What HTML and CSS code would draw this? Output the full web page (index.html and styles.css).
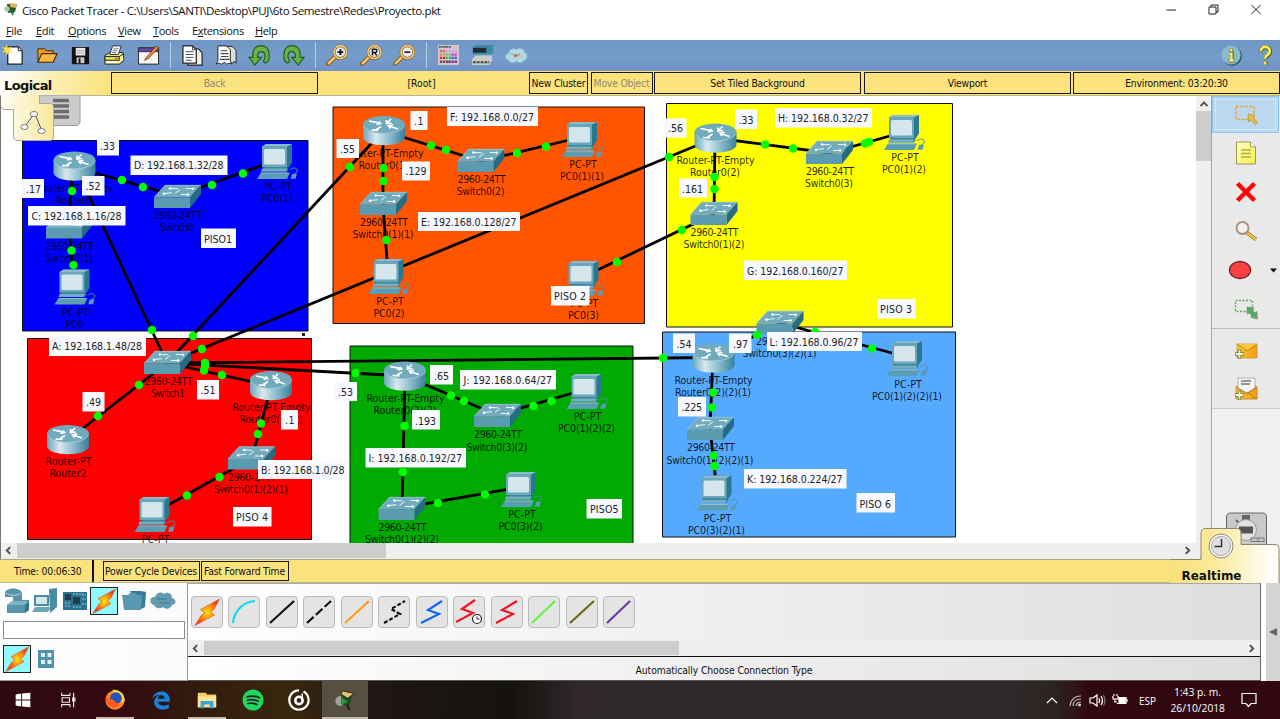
FILE: index.html
```html
<!DOCTYPE html>
<html lang="en">
<head>
<meta charset="utf-8">
<title>Cisco Packet Tracer</title>
<link rel="stylesheet" href="styles.css">
</head>
<body>
<svg class="defs" width="0" height="0">
  <defs>
    <linearGradient id="metal" x1="0" x2="1" y1="0" y2="0"><stop offset="0" stop-color="#6aa5ba"/><stop offset=".3" stop-color="#d9e9ef"/><stop offset=".6" stop-color="#92c0cf"/><stop offset="1" stop-color="#377f99"/></linearGradient>
    <linearGradient id="tabL" x1="0" x2="1"><stop offset="0" stop-color="#fffdf4"/><stop offset="1" stop-color="#f8e89a"/></linearGradient>
    <linearGradient id="tabR" gradientUnits="userSpaceOnUse" x1="1170" x2="1272" y1="0" y2="0"><stop offset="0" stop-color="#f8e07a"/><stop offset=".45" stop-color="#fbeb9c"/><stop offset="1" stop-color="#fffefa"/></linearGradient>
    <radialGradient id="flame"><stop offset="0" stop-color="#ffe600"/><stop offset=".45" stop-color="#ff9a10"/><stop offset="1" stop-color="#f23a1c"/></radialGradient>
    <linearGradient id="note" x1="0" y1="0" x2="1" y2="1"><stop offset="0" stop-color="#ffffc8"/><stop offset="1" stop-color="#f4f04a"/></linearGradient>
    <linearGradient id="mail" x1="0" x2="1"><stop offset="0" stop-color="#ffc72e"/><stop offset="1" stop-color="#f39c12"/></linearGradient>
    <symbol id="router" viewBox="0 0 42 30" overflow="visible">
      <path d="M0 8.5V21C0 32 42 32 42 21V8.5z" fill="url(#metal)"/>
      <ellipse cx="21" cy="8.7" rx="21" ry="8.7" fill="#6faabd"/>
      <path d="M1 10.500C5 19.500 37 19.500 41 10.500" fill="none" stroke="#a9cfdb" stroke-width=".8"/>
      <g fill="none" stroke="#fff" stroke-width="1.700"><path d="M6 5l11 2.200M13.500 8.500l4-1-1.500-2M35 13l-9-3M30 8.800l-4.500 1 2 2.600M24 7l4-4M23.500 4l0 3.500 5-.5M18 10.500l-5 3.300M8.500 14l7 .3"/></g>
    </symbol>
    <symbol id="switch" viewBox="0 0 47 23" overflow="visible">
      <path d="M0 12.500L11 0H47L36 12.500z" fill="#72abbe"/><path d="M36 12.500L47 0V9L36 23z" fill="#246b84"/>
      <path d="M0 12.500H36V23H0z" fill="#5a9bb1"/><path d="M0 12.500L11 .3H47" fill="none" stroke="#9cc8d5" stroke-width=".7"/>
      <g stroke="#edf7fa" stroke-width="1" fill="none"><path d="M17 3.500l7 .3M26 4.500l-5 4M10 8.500l8-.8M27 9.500h8M32 3.500h7"/></g>
      <g fill="#fff"><circle cx="16" cy="3.500" r="1.300"/><circle cx="39" cy="3.700" r="1.300"/><circle cx="10" cy="8.700" r="1.300"/><circle cx="34" cy="9.500" r="1.300"/></g>
    </symbol>
    <symbol id="pc" viewBox="0 0 42 35" overflow="visible">
      <path d="M5 2.500L9 0H35V18.500L31 24.500H6z" fill="#287892"/><path d="M5 2.500H30V23H5z" fill="#6ba7bb"/>
      <path d="M5 2.500L9 0H35L30 2.500z" fill="#8abccc"/><rect x="7" y="5" width="21" height="15.500" rx="1.500" fill="#d5e5ec"/>
      <path d="M9 23h18l5 2-2 2.500H5z" fill="#3c88a1"/><path d="M5 24.500h25l-1 3H4z" fill="#75adc0"/>
      <path d="M4 28.500H33L30 35H0z" fill="#5b9eb4"/><path d="M4 29h27" stroke="#a6cbd7" stroke-width=".7"/>
      <path d="M33 26c4-4 9-1 7 2l-3 2" fill="none" stroke="#4e91a8" stroke-width="1"/><path d="M35 30l5-.3-1.500 5h-4.800z" fill="#5b9bb1"/>
    </symbol>
    <symbol id="bolt" viewBox="0 0 28 28"><path d="M26.500 1L7.500 11.500l4.500 3.500-3.500 2L2 27.500 21.500 17l-4-3.500 3.500-2z" fill="url(#flame)" stroke="#d9530d" stroke-width=".6"/></symbol>
    <symbol id="glass" viewBox="0 0 24 24"><path d="M10 13L2.500 20.500" stroke="#7a5a22" stroke-width="4.600" stroke-linecap="round"/><path d="M10 13L2.800 20.200" stroke="#f6c269" stroke-width="2.800" stroke-linecap="round"/><circle cx="15" cy="8.500" r="6.600" fill="#e9eef3" stroke="#7a5a22" stroke-width="3"/><circle cx="15" cy="8.500" r="6.700" fill="none" stroke="#f6c777" stroke-width="1.800"/></symbol>
    <symbol id="left" viewBox="0 0 8 8"><path d="M5.500 1L2.500 4l3 3" fill="none" stroke="#505050" stroke-width="1.700"/></symbol>
  </defs>
</svg>

<header class="title">
  <svg width="14" height="16" viewBox="0 0 14 16"><path d="M3 2l10 0-2 8-7 1z" fill="#255c22"/><path d="M6 1l7 1-1 4-6-1z" fill="#d7b25c"/><circle cx="3" cy="7" r="2.700" fill="#b9c0b7"/><path d="M5 8l5 2-1 4z" fill="#2c7b2d"/></svg>
  <span class="title-text">Cisco Packet Tracer - C:\Users\SANTI\Desktop\PUJ\6to Semestre\Redes\Proyecto.pkt</span>
  <svg class="winctl" width="100" height="20" viewBox="0 0 100 20" fill="none" stroke="#222"><path d="M6.500 10h9.500"/><path d="M49 7h7v7h-7zM51 7V5h7v7h-2"/><path d="M92 5l9 9M101 5l-9 9" transform="translate(-.5)"/></svg>
</header>
<nav class="menu"><span class="m1"><u>F</u>ile</span><span class="m2"><u>E</u>dit</span><span class="m3"><u>O</u>ptions</span><span class="m4"><u>V</u>iew</span><span class="m5"><u>T</u>ools</span><span class="m6">E<u>x</u>tensions</span><span class="m7"><u>H</u>elp</span></nav>

<div class="toolbar">
  <span class="tb"><svg viewBox="0 0 24 24"><path d="M6 3h11l4 4v14H6z" fill="#fff" stroke="#222" stroke-width="1.300"/><path d="M17 3v4h4" fill="#ddd" stroke="#222"/><path d="M5 0l1 4 4-1-2 3 3 3-4-1-2 4-1-4-4 1 3-3-3-3 4 1z" fill="#ffe53b"/></svg></span>
  <span class="tb"><svg viewBox="0 0 24 24"><path d="M2 19V5h7l1.500 2H18v4" fill="#f19a1c" stroke="#3d2a08"/><path d="M2 19l4-9h16l-4 9z" fill="#ffb73e" stroke="#3d2a08" stroke-width="1.200"/></svg></span>
  <span class="tb"><svg viewBox="0 0 24 24"><path d="M3 3h18v18H4l-1-1z" fill="#111"/><path d="M7 4h10v8H7z" fill="#e8e8e8"/><path d="M8 14h8v6H8z" fill="#ccc"/><path d="M10 15h2v5h-2z" fill="#111"/><path d="M8 7h8M8 9.500h8" stroke="#aaa"/></svg></span>
  <span class="tb"><svg viewBox="0 0 24 24"><path d="M2 12l5-3h14l1 8-5 4H2z" fill="#edf08b" stroke="#222"/><path d="M7 11l3-9h9l-3 9z" fill="#f7f7f7" stroke="#333"/><path d="M11 5h5M10 7h5M9 9h5" stroke="#777"/><path d="M2 13h15v4H2zM17 13l5-3" fill="#d8df60" stroke="#222"/><path d="M4 19h11" stroke="#fff" stroke-width="1.500"/><circle cx="14" cy="15" r="1" fill="#d22"/></svg></span>
  <span class="tb"><svg viewBox="0 0 24 24"><path d="M1.500 4h21v17h-21z" fill="#f5f5f5" stroke="#222"/><path d="M1.500 4h21v4h-21z" fill="#6742a8" stroke="#333"/><path d="M9 15L20 2l2.500 2L12 15l-4 2z" fill="#f18a35" stroke="#5c3213" stroke-width=".8"/></svg></span>
  <i class="sep"></i>
  <span class="tb"><svg viewBox="0 0 24 24"><path d="M7 5h11l4 4v13H7z" fill="#eee" stroke="#222" stroke-width="1.200"/><path d="M2 2h10l4 4v14H2z" fill="#fff" stroke="#222" stroke-width="1.300"/><path d="M12 2v4h4M5 8h8M5 11h8M5 14h8M5 17h6" fill="none" stroke="#444"/></svg></span>
  <span class="tb"><svg viewBox="0 0 24 24"><path d="M9 5V2.500h9l4 4V20l-2-2-2 2-2-2" fill="#ddd" stroke="#222"/><path d="M3 2h9l4 4v12l2 3-3-1-3 1-2-2-3 2-3-1-3 1 2-3z" fill="#fff" stroke="#222"/><path d="M6 7h7M6 10h8M6 13h8M5 16h10" stroke="#444" stroke-width="1.200"/></svg></span>
  <span class="tb"><svg viewBox="0 0 24 24"><path d="M1 14h4v-4c0-11 17-11 17 0v4c0 3-2 5-4 6l-2-2c3-5 2-10-2-10-3 0-4 2-4 5v1h4l-7 8z" fill="#62b344" stroke="#225c19" stroke-width="1.200"/></svg></span>
  <span class="tb"><svg viewBox="0 0 24 24"><path transform="matrix(-1 0 0 1 24 0)" d="M1 14h4v-4c0-11 17-11 17 0v4c0 3-2 5-4 6l-2-2c3-5 2-10-2-10-3 0-4 2-4 5v1h4l-7 8z" fill="#62b344" stroke="#225c19" stroke-width="1.200"/></svg></span>
  <i class="sep"></i>
  <span class="tb"><svg viewBox="0 0 24 24"><use href="#glass"/><path d="M12 8.500h6M15 5.500v6" stroke="#111" stroke-width="2"/></svg></span>
  <span class="tb"><svg viewBox="0 0 24 24"><use href="#glass"/><path d="M13 12V5.500h3a1.500 1.500 0 010 3.300h-3M15 9l2.500 3" fill="none" stroke="#111" stroke-width="1.500"/></svg></span>
  <span class="tb"><svg viewBox="0 0 24 24"><use href="#glass"/><path d="M12 8.500h6" stroke="#111" stroke-width="1.600"/></svg></span>
  <i class="sep"></i>
  <span class="tb"><svg viewBox="0 0 24 24"><path d="M1 1h22v21H1z" fill="#cbc6cf"/><path d="M2 3h13" stroke="#555" stroke-width="2" stroke-dasharray="2 .6"/><g stroke-width="2.400" stroke-dasharray="2.400 .8"><path d="M3 7.500h6" stroke="#f25858"/><path d="M9 7.500h12" stroke="#e09be6"/><path d="M3 11h6" stroke="#ee913d"/><path d="M9 11h6" stroke="#65d45b"/><path d="M15 11h6" stroke="#e42ee0"/><path d="M3 14.500h6" stroke="#e32222"/><path d="M9 14.500h6" stroke="#22c76c"/><path d="M15 14.500h6" stroke="#594fe4"/><path d="M3 18.500h9" stroke="#884444"/><path d="M12 18.500h9" stroke="#7b308c"/></g></svg></span>
  <span class="tb"><svg viewBox="0 0 24 24"><path d="M2 3l3-2h18v8l-3 2H2z" fill="#3e8ba4"/><path d="M2 4h14v5H2z" fill="#222b30"/><path d="M1 16l4-4h17v5l-3 5H1z" fill="#c9cdc8"/><path d="M2 19h17" stroke="#444" stroke-width="2" stroke-dasharray="3 1"/></svg></span>
  <span class="tb"><svg viewBox="0 0 24 24"><path d="M4 17c-5-1-4-7 0-7 0-5 6-6 8-4 4-3 9 0 8 3 4 1 4 7 0 8-2 3-6 3-8 1-3 2-7 2-8-1z" fill="#b5d9e3" stroke="#8bbdcc"/><path d="M6 10l5 2 5-2M9 14l5-2 3 1" stroke="#e76" fill="none"/><circle cx="11" cy="12" r="1.200" fill="#2a8c4a"/></svg></span>
  <span class="grow"></span>
  <span class="tb"><svg viewBox="0 0 24 24"><circle cx="12.600" cy="12.600" r="10.300" fill="#2e5f72"/><circle cx="11.500" cy="11.500" r="10" fill="#8dbacb"/><path d="M12 5v2.600M9.500 10h3v7M9 17.500h6" stroke="#4c5540" stroke-width="3.600" fill="none"/><path d="M11.800 5v2.500M9.500 10h2.500v7M9.500 17.200h5" stroke="#f7f15a" stroke-width="2.400" fill="none"/></svg></span>
  <span class="tb"><svg viewBox="0 0 24 24"><path d="M7 8c0-6 10-6 10 0 0 4-5 4-5 8M12 18.500v3" stroke="#5e5b22" stroke-width="4.200" fill="none"/><path d="M7 7.500c0-6 9.500-6 9.500 0 0 4-5 4-5 8M11.500 18.500v2.800" stroke="#fbf04d" stroke-width="2.800" fill="none"/></svg></span>
</div>

<div class="nav">
  <b class="logical">Logical</b><span class="btn dim back">Back</span><span class="root">[Root]</span><span class="btn">New Cluster</span><i></i><span class="btn dim">Move Object</span><i></i><span class="btn">Set Tiled Background</span><i></i><span class="btn">Viewport</span><i></i><span class="btn">Environment: 03:20:30</span>
</div>

<main class="work">
  <div class="canvas-col">
    <div class="canvas-row">
      <svg class="canvas" width="1195" height="447" viewBox="1 96 1195 447">
        <g stroke="#111" stroke-width="1">
          <path fill="#00f" d="M22.500 140.500H308V331H22.500z"/><path fill="#f50" d="M333 107H644.500V323.500H333z"/><path fill="#ff0" d="M666.500 103.500H952.500V327H666.500z"/><path fill="red" d="M27.500 338.500H311.500V539.500H27.500z"/><path fill="#0a0" d="M350 346H633V560H350z"/><path fill="#5af" d="M662.500 332H955.500V537H662.500z"/>
        </g>
        <path d="M302 333h3v3h-3z" fill="#222"/>
        <g stroke="#000" stroke-width="2.800" fill="none">
          <path d="M74 167L177 196L277 160M72 167L69 227L74 285M75 166L167 363M383 131L167 363L715 138M383 131L481 161L582 137M383 131V204L388 275M715 138L829 153L904 132M715 138L714 214L583 277M68 440L167 363L271 386L252 458L154 513M167 363L405 376M167 363L713 357.500M405 376L497 415L587 389M405 376L402 508L521 487M713 357L710 428L717 492M713 357L780 323L907 357"/>
        </g>
        <g>
          <use href="#router" x="53.500" y="151.500" width="42" height="30"/><use href="#router" x="363" y="116" width="42" height="30"/><use href="#router" x="694.500" y="123.500" width="42" height="30"/><use href="#router" x="250" y="371" width="42" height="30"/><use href="#router" x="47" y="425" width="42" height="30"/><use href="#router" x="384" y="361.500" width="42" height="30"/><use href="#router" x="692.500" y="343.500" width="42" height="30"/>
          <use href="#switch" x="154" y="185" width="47" height="23"/><use href="#switch" x="46" y="215.500" width="47" height="23"/><use href="#switch" x="457.500" y="149" width="47" height="23"/><use href="#switch" x="360" y="192" width="47" height="23"/><use href="#switch" x="806" y="141" width="47" height="23"/><use href="#switch" x="690.500" y="202" width="47" height="23"/><use href="#switch" x="756.500" y="311" width="47" height="23"/><use href="#switch" x="144" y="351" width="47" height="23"/><use href="#switch" x="228" y="446.500" width="47" height="23"/><use href="#switch" x="474" y="404" width="47" height="23"/><use href="#switch" x="378.500" y="497" width="47" height="23"/><use href="#switch" x="687" y="417" width="47" height="23"/>
          <use href="#pc" x="257" y="144" width="42" height="35"/><use href="#pc" x="54.500" y="269.500" width="42" height="35"/><use href="#pc" x="562" y="122" width="42" height="35"/><use href="#pc" x="368.500" y="259" width="42" height="35"/><use href="#pc" x="563.500" y="261" width="42" height="35"/><use href="#pc" x="884" y="115" width="42" height="35"/><use href="#pc" x="134.500" y="497" width="42" height="35"/><use href="#pc" x="566.500" y="374" width="42" height="35"/><use href="#pc" x="501" y="472" width="42" height="35"/><use href="#pc" x="887" y="341" width="42" height="35"/><use href="#pc" x="696.500" y="475.500" width="42" height="35"/>
        </g>
        <g class="lbl">
          <text x="74" y="192" textLength="78">Router-PT-Empty</text><text x="73.500" y="204" textLength="36">Router0</text>
          <text x="384.500" y="157" textLength="78">Router-PT-Empty</text><text x="383.500" y="169" textLength="50">Router0(1)</text>
          <text x="715.500" y="164" textLength="78">Router-PT-Empty</text><text x="715" y="176" textLength="50">Router0(2)</text>
          <text x="271.500" y="411" textLength="78">Router-PT-Empty</text><text x="271" y="423" textLength="63">Router0(1)(2)</text>
          <text x="68.500" y="465" textLength="46">Router-PT</text><text x="68" y="477" textLength="37">Router2</text>
          <text x="405.500" y="402" textLength="78">Router-PT-Empty</text><text x="405" y="414" textLength="63">Router0(2)(2)</text>
          <text x="713.500" y="384" textLength="78">Router-PT-Empty</text><text x="713" y="396" textLength="76">Router0(2)(2)(1)</text>
          <text x="177.500" y="219" textLength="48">2960-24TT</text><text x="176.500" y="231" textLength="34">Switch0</text>
          <text x="69.500" y="249.500" textLength="48">2960-24TT</text><text x="69" y="261.500" textLength="48">Switch0(1)</text>
          <text x="481.500" y="183" textLength="48">2960-24TT</text><text x="480.500" y="195" textLength="48">Switch0(2)</text>
          <text x="384" y="226" textLength="48">2960-24TT</text><text x="383" y="238" textLength="61">Switch0(1)(1)</text>
          <text x="830" y="175" textLength="48">2960-24TT</text><text x="829" y="187" textLength="48">Switch0(3)</text>
          <text x="714.500" y="236" textLength="48">2960-24TT</text><text x="714" y="248" textLength="61">Switch0(1)(2)</text>
          <text x="780" y="345" textLength="48">2960-24TT</text><text x="779.500" y="357" textLength="74">Switch0(3)(2)(1)</text>
          <text x="168.500" y="385" textLength="48">2960-24TT</text><text x="168" y="397" textLength="34">Switch1</text>
          <text x="252" y="480.500" textLength="48">2960-24TT</text><text x="251" y="492.500" textLength="74">Switch0(1)(2)(1)</text>
          <text x="498" y="438" textLength="48">2960-24TT</text><text x="497" y="450.500" textLength="61">Switch0(3)(2)</text>
          <text x="402.500" y="531" textLength="48">2960-24TT</text><text x="402" y="542.500" textLength="74">Switch0(1)(2)(2)</text>
          <text x="711" y="451" textLength="48">2960-24TT</text><text x="710" y="463.500" textLength="87">Switch0(1)(2)(2)(1)</text>
          <text x="278" y="190" textLength="27.500">PC-PT</text><text x="277" y="202" textLength="31">PC0(1)</text>
          <text x="75.500" y="315.500" textLength="27.500">PC-PT</text><text x="74.500" y="328" textLength="18">PC0</text>
          <text x="583" y="168" textLength="27.500">PC-PT</text><text x="582" y="180" textLength="44">PC0(1)(1)</text>
          <text x="390" y="305" textLength="27.500">PC-PT</text><text x="389" y="317" textLength="31">PC0(2)</text>
          <text x="584.500" y="307" textLength="27.500">PC-PT</text><text x="583.500" y="319" textLength="31">PC0(3)</text>
          <text x="905" y="161" textLength="27.500">PC-PT</text><text x="904" y="173" textLength="44">PC0(1)(2)</text>
          <text x="155.500" y="543" textLength="27.500">PC-PT</text>
          <text x="587.500" y="420" textLength="27.500">PC-PT</text><text x="586.500" y="432" textLength="57">PC0(1)(2)(2)</text>
          <text x="522" y="518" textLength="27.500">PC-PT</text><text x="520.500" y="530" textLength="44">PC0(3)(2)</text>
          <text x="908" y="387.500" textLength="27.500">PC-PT</text><text x="907" y="399.500" textLength="70">PC0(1)(2)(2)(1)</text>
          <text x="717.500" y="521.500" textLength="27.500">PC-PT</text><text x="716.500" y="533.500" textLength="57">PC0(3)(2)(1)</text>
        </g>
        <path class="dots" d="M122 180h0M143 187h0M212 185h0M243 173.500h0M72 191h0M71.500 250.500h0M73.500 265h0M152 330h0M193 336h0M350 167h0M202 349h0M669 157h0M431 145.500h0M446 150h0M517 153h0M546 146.500h0M383.500 168h0M383.500 181h0M386.500 240h0M765 144.500h0M793 148.500h0M865 143.500h0M869 142h0M714.500 177h0M714.500 189h0M682 230h0M617 262h0M139 385h0M98 416h0M204 370.500h0M222 375h0M205 366h0M355.500 373h0M205 363h0M663 358h0M261 423.500h0M258 434h0M219.500 477h0M187 495.500h0M451 395.500h0M464 401h0M533.500 406h0M551.500 401h0M404.500 426h0M403 472h0M438 503h0M485 494.500h0M713 392.500h0M712 407.500h0M713.500 455.500h0M714.500 466h0M757 335h0M815 332h0M872 348.500h0"/>
        <path fill="#f7f9ff" d="M97 137h22v18.500H97zM130.500 155.500h97v19.500h-97zM22 179h22v19H22zM82 176h22.500v19.500H82zM28 206h97.500v19.500H28zM201 228.500h35V248h-35zM49 337.500h97V356H49zM197 380h22v19.500h-22zM82.500 392h22v19.500h-22zM281 410h17v19.500h-17zM258 460h90v19h-90zM233 507h38.500v19.500H233zM410.500 111h17v19h-17zM447 107h91v19h-91zM336.500 139H359v19h-22.500zM402 161.500h28v19h-28zM418 212h102v19H418zM551 286h38.500v19.500H551zM664.500 118.500h22v19h-22zM735 109.500h22V129h-22zM775 108h97v19.500h-97zM679 178.500h28v19h-28zM744 260.500h103V280H744zM877 299h38.500v19.500H877zM673 333.500h22V353h-22zM729 333.500h22.500V353H729zM767 332h95v19h-95zM678 397h28v19.500h-28zM744 469h102.500v19.500H744zM856.500 493H895v19.500h-38.500zM334.500 382H357v19h-22.500zM430 365h23v19.500h-23zM460 370h96v19.500h-96zM412 410h28v19.500h-28zM365.500 448h100.500v19.500H365.500zM586.500 499H622v19.500h-35.500z"/>
        <g class="note">
          <text x="100" y="150" textLength="15">.33</text><text x="134" y="169" textLength="89.500">D: 192.168.1.32/28</text><text x="26" y="193" textLength="15">.17</text><text x="85.500" y="190" textLength="15">.52</text><text x="31.500" y="220" textLength="90">C: 192.168.1.16/28</text><text x="204" y="243" textLength="28">PISO1</text>
          <text x="52" y="350" textLength="90">A: 192.168.1.48/28</text><text x="200.500" y="394" textLength="15">.51</text><text x="86" y="406" textLength="15">.49</text><text x="285" y="424" textLength="9.500">.1</text><text x="261" y="474" textLength="83.500">B: 192.168.1.0/28</text><text x="236" y="521" textLength="32">PISO 4</text>
          <text x="414" y="125" textLength="9.500">.1</text><text x="450" y="121" textLength="84">F: 192.168.0.0/27</text><text x="340" y="153" textLength="15">.55</text><text x="405.500" y="175" textLength="21">.129</text><text x="421" y="226" textLength="95.500">E: 192.168.0.128/27</text><text x="554" y="300" textLength="32">PISO 2</text>
          <text x="668" y="132" textLength="15">.56</text><text x="738.500" y="124" textLength="15">.33</text><text x="778" y="122" textLength="90.500">H: 192.168.0.32/27</text><text x="682" y="192.500" textLength="21">.161</text><text x="747" y="274.500" textLength="96.500">G: 192.168.0.160/27</text><text x="880" y="313" textLength="32">PISO 3</text>
          <text x="676.500" y="348" textLength="15">.54</text><text x="733" y="348" textLength="15">.97</text><text x="769.500" y="346" textLength="89">L: 192.168.0.96/27</text><text x="681.500" y="411" textLength="20.500">.225</text><text x="747" y="483" textLength="95.500">K: 192.168.0.224/27</text><text x="859.500" y="507.500" textLength="31.500">PISO 6</text>
          <text x="338" y="396" textLength="15">.53</text><text x="434" y="379.500" textLength="15">.65</text><text x="463.500" y="384" textLength="88.500">J: 192.168.0.64/27</text><text x="415" y="424.500" textLength="21">.193</text><text x="368.500" y="462" textLength="93.500">I: 192.168.0.192/27</text><text x="590" y="513" textLength="28.500">PISO5</text>
        </g>
      </svg>
      <div class="vscroll"><svg width="10" height="8" viewBox="0 0 10 8"><path d="M1.500 6L5 2.500 8.500 6" fill="none" stroke="#505050" stroke-width="1.800"/></svg><i></i></div>
    </div>
    <div class="hscroll"><svg width="9" height="9"><use href="#left"/></svg><i></i><span class="grow"></span><svg class="flip" width="9" height="9"><use href="#left"/></svg></div>
  </div>
  <aside class="side">
    <div class="side-box">
      <span class="sb sel"><svg width="24" height="22" viewBox="0 0 24 22"><path d="M2 2.500h18v13H2z" fill="none" stroke="#eba32c" stroke-width="1.400" stroke-dasharray="3 1.500"/><path d="M14 10l7 1.500-2 2 4.500 5-2 2-5-4.500-2 2z" fill="#efbd34" stroke="#a98d50" stroke-width=".7"/></svg></span>
      <span class="sb"><svg width="22" height="24" viewBox="0 0 22 24"><path d="M1.500 1h14l5 5v17h-19z" fill="url(#note)" stroke="#9a9a50"/><path d="M15.500 1v5h5" fill="#fff" stroke="#9a9a50"/><path d="M6 9h10M6 12.500h10M6 16h10" stroke="#b3ae3d" stroke-width="1.400"/></svg></span>
      <span class="sb"><svg width="22" height="22" viewBox="0 0 22 22"><path d="M2.500 2.500l17 17M19.500 2.500l-17 17" stroke="#f90808" stroke-width="4.500"/></svg></span>
      <span class="sb"><svg width="24" height="22" viewBox="0 0 24 22"><path d="M12 12l10 7.500" stroke="#8f7c35" stroke-width="3.600"/><path d="M12 12l10 7.500" stroke="#f3c33a" stroke-width="2.200"/><circle cx="8.500" cy="8" r="6" fill="#f1f0ed" stroke="#a68e80" stroke-width="1.800"/></svg></span>
      <span class="sb ov"><svg width="68" height="22" viewBox="0 0 68 22"><ellipse cx="28" cy="11" rx="10.500" ry="8.500" fill="#fb4040" stroke="#79272a" stroke-width="1.400"/><path d="M58 9.500h7l-3.500 4z" fill="#111"/></svg></span>
      <span class="sb"><svg width="24" height="22" viewBox="0 0 24 22"><path d="M1.500 2.500h17v11h-17z" fill="none" stroke="#62a85c" stroke-width="1.400" stroke-dasharray="2 1.500"/><path d="M13 9l6.500.5-.5 4 2 1 2-1 .5 7.500-6.500-1.500.5-2-2.500-2.500-2 1z" fill="#5ba864" stroke="#7b9a7a" stroke-width=".7"/></svg></span>
      <hr>
      <span class="sb mail"><svg width="24" height="22" viewBox="0 0 24 22"><path d="M3 4h20v14H3z" fill="url(#mail)" stroke="#c89135" stroke-width=".8"/><path d="M3 4l10 7L23 4" fill="#ffc63a" stroke="#a87624" stroke-width=".8"/><path d="M1 14h9M5.500 9.500v9" stroke="#6d7b38" stroke-width="3.400"/><path d="M1.700 14h7.600M5.500 10.200v7.600" stroke="#f4f7d8" stroke-width="1.800"/></svg></span>
      <span class="sb mail"><svg width="24" height="24" viewBox="0 0 24 24"><path d="M2 10l11-6 10 6v12H2z" fill="url(#mail)" stroke="#b67f28" stroke-width=".8"/><path d="M4 1h17v10l-8 5-9-5z" fill="#f5f5ef" stroke="#888" stroke-width=".6"/><path d="M7 4h10M7 7h9" stroke="#777" stroke-width="1.300"/><path d="M2 10l11 7 10-7M23 22l-10-7" fill="none" stroke="#ad741b" stroke-width=".8"/><path d="M1 18h9M5.500 13.500v9" stroke="#6d7b38" stroke-width="3.400"/><path d="M1.700 18h7.600M5.500 14.200v7.600" stroke="#f4f7d8" stroke-width="1.800"/></svg></span>
    </div>
  </aside>
</main>

<div class="timebar"><span class="time">Time: 00:06:30</span><i></i><span class="btn pc">Power Cycle Devices</span><span class="btn ff">Fast Forward Time</span></div>

<section class="bottom">
  <div class="palette">
    <div class="row1">
      <svg viewBox="0 0 28 28"><path d="M2 6c0-6 16-6 17 0v7l7 0v10l-4 3H4v-8l6-4v-4l-8 0z" fill="#5695ac"/><path d="M4 18l5-4h17l-4 4z" fill="#7fb3c4"/><path d="M22 18l4-4v9l-4 3z" fill="#2f7791"/><path d="M3 6c4 3 12 3 15 0" stroke="#b6d3dd" fill="none"/></svg>
      <svg viewBox="0 0 28 28"><path d="M17 2l8-1v19l-7 6z" fill="#4a8ba5"/><path d="M2 8h15v11H2z" fill="#4b8ca6"/><path d="M4 10h11v7H4z" fill="#d5e8ef"/><path d="M3 20h16l-3 5H0z" fill="#6ba7bb"/></svg>
      <svg viewBox="0 0 28 28"><path d="M2 5h24v18H2z" fill="#2c7291"/><path d="M4 7h6v6H4zM12 10h7v7h-7z" fill="#203d50"/><path d="M4 16h6M4 19h6M21 8h4M21 12h4M21 17h4M12 7h10M12 20h8" stroke="#a8cbd9" stroke-dasharray="2 1"/></svg>
      <span class="picked"><svg viewBox="0 0 28 28"><use href="#bolt"/></svg></span>
      <svg viewBox="0 0 28 28"><path d="M10 4h11l5 1-1 15-6 3z" fill="#377d98"/><path d="M2 8h6l2-2h5l2 2h5l-1 15H4z" fill="#5799b0"/></svg>
      <svg viewBox="0 0 28 28"><path d="M5 18c-6-2-4-9 1-8 2-6 7-5 9-3 4-3 8 0 8 4 5 1 4 7 0 7-2 5-7 4-9 2-3 2-7 2-9-2z" fill="#6399ae"/><path d="M8 12h10M10 16h11" stroke="#3c7b93"/></svg>
    </div>
    <div class="search"></div>
    <div class="row2"><span class="picked"><svg viewBox="0 0 28 28"><use href="#bolt"/></svg></span><svg class="bld" viewBox="0 0 28 28"><path d="M5 5h16v18H5z" fill="#4e92ab"/><path d="M8 8h4v4H8zM14.500 8h4v4h-4zM8 15h4v4H8zM14.500 15h4v4h-4z" fill="#e3f2f6"/></svg></div>
  </div>
  <div class="mid">
    <div class="cables">
      <span><svg viewBox="0 0 28 28"><use href="#bolt"/></svg></span>
      <span><svg viewBox="0 0 28 28"><path d="M3 25C4 14 12 4 25 3" stroke="#17d9ee"/></svg></span>
      <span><svg viewBox="0 0 28 28"><path d="M2 25L26 3" stroke="#111"/></svg></span>
      <span><svg viewBox="0 0 28 28"><path d="M2 25L26 3" stroke="#111" stroke-dasharray="9 3"/></svg></span>
      <span><svg viewBox="0 0 28 28"><path d="M2 25L26 3" stroke="#ff9b19"/></svg></span>
      <span><svg viewBox="0 0 28 28"><path d="M4 25l16-9-9-5L25 3" stroke="#111" stroke-dasharray="4 2"/></svg></span>
      <span><svg viewBox="0 0 28 28"><path d="M3 25l18-9-11-4L24 3" stroke="#1167f4"/></svg></span>
      <span><svg viewBox="0 0 28 28"><path d="M1 24l17-9-11-4L20 2" stroke="#ed1725"/><circle cx="22" cy="21" r="4.500" fill="#fff" stroke="#222" stroke-width="1.200"/><path d="M22 18.500V21h2.500" stroke="#222" stroke-width="1"/></svg></span>
      <span><svg viewBox="0 0 28 28"><path d="M3 25l17-9-11-4L24 3" stroke="#ed1725"/></svg></span>
      <span><svg viewBox="0 0 28 28"><path d="M2 25L25 3" stroke="#66ef3c"/></svg></span>
      <span><svg viewBox="0 0 28 28"><path d="M2 25L26 3" stroke="#6e6810"/></svg></span>
      <span><svg viewBox="0 0 28 28"><path d="M2 25L25 3" stroke="#6a3da6"/></svg></span>
    </div>
    <div class="cscroll"><svg width="9" height="9"><use href="#left"/></svg><i></i><span class="grow"></span><svg class="flip" width="9" height="9"><use href="#left"/></svg></div>
    <div class="status">Automatically Choose Connection Type</div>
  </div>
  <div class="collapse"><svg width="8" height="8"><path d="M8 0v8L0 4z" fill="#666"/></svg></div>
</section>

<footer class="taskbar">
  <span><svg viewBox="0 0 24 24"><path d="M4 6l6-1v6.500H4zM11 4.800L20 4v7.500h-9zM4 12.500h6V19l-6-1zM11 12.500h9V20l-9-.9z" fill="#fff"/></svg></span>
  <span><svg viewBox="0 0 24 24"><path d="M4 4v3h9V4M4 20v-3h9v3M4.500 9.500h8v5h-8zM17 4v16M16 10h2.500v3H16z" fill="none" stroke="#eee" stroke-width="1.200"/></svg></span>
  <span class="open"><svg viewBox="0 0 24 24"><circle cx="12" cy="12" r="10.500" fill="#ff8a1a"/><path d="M9 1c8-1 14 5 13.500 12l-6 3c2-5-1-8-4-9z" fill="#ffdd36"/><circle cx="13" cy="10" r="6.500" fill="#2b50bd"/><path d="M2 8c1 4 5 2 8 4 3 1 1 4 5 3 2 0 3 3-1 5-7 2-13-4-12-12z" fill="#ff5a22"/></svg></span>
  <span><svg viewBox="0 0 24 24"><path d="M2.500 11C4 1 20-1 21.500 11v3H8.500c1 5 8 5 12 2.500V21C9 26 1 17 6 10c2-3 5-4 8-3-8-2-10 2-11.500 4zM8.500 10.500H16C16 6 9 5 8.500 10.500z" fill="#1583dc" fill-rule="evenodd"/></svg></span>
  <span class="open"><svg viewBox="0 0 24 24"><path d="M2 4h9l1 2h10v14H2z" fill="#f5cd64"/><path d="M2 8h20v12H2z" fill="#ffe596"/><path d="M5 21v-8h14v8h-4v-4H9v4z" fill="#36a8dc"/></svg></span>
  <span><svg viewBox="0 0 24 24"><circle cx="12" cy="12" r="11.500" fill="#1ed760"/><path d="M5.500 8.500c5-1.500 9-1 13.500 1M6 12.300c4-1.200 8-.8 11.500 1M6.500 15.800c3.500-1 6.500-.6 9.500 1" fill="none" stroke="#14241b" stroke-width="1.900" stroke-linecap="round"/></svg></span>
  <span><svg viewBox="0 0 24 24"><path d="M17 2.800A10.500 10.500 0 1 1 12 1.500" fill="none" stroke="#fff" stroke-width="2.400"/><circle cx="12" cy="12.500" r="4" fill="none" stroke="#fff" stroke-width="2.800"/><path d="M15.500 12V5" stroke="#fff" stroke-width="1.600"/></svg></span>
  <span class="open active"><svg viewBox="0 0 24 24"><circle cx="7" cy="13" r="5.500" fill="#b2b8ae" opacity=".8"/><path d="M8 4l12 2-3 12-9-1z" fill="#1b4e20"/><path d="M9 2l13 3-7 5-7-4z" fill="#e6c172" stroke="#111" stroke-width=".8"/><path d="M8 9l7 5-6 3z" fill="#2c9a38"/><path d="M14 17l3 6" stroke="#111" stroke-width="1.500"/></svg></span>
  <span class="grow"></span>
  <div class="tray">
    <svg width="228" height="38" viewBox="1040 681 228 38" fill="none" stroke="#fff" stroke-width="1.200">
      <path d="M1047 703l5-5 5 5"/>
      <g stroke="#bbb"><path d="M1070 706c0-5 4-10 11-10M1073 706c0-4 3-7 8-7M1076 706c0-2 2-4 5-4"/><circle cx="1079.500" cy="705" r="1" fill="#fff"/></g>
      <path d="M1090 698h3l4-3v11l-4-3h-3zM1099 698c1 2 1 3 0 5M1101 696c2 3 2 6 0 9" /><path d="M1103.500 695c2 4 2 7 0 11" stroke="#777"/>
      <path d="M1115 699v3h2M1113 696v3h5v-3M1114 694v2M1117 694v2"/><path d="M1118 697.500h8v6h-9" /><path d="M1119 698h6v5h-6z" fill="#fff"/><path d="M1127 699v3"/>
      <path d="M1242 693.500h14v10h-5l-2.500 3-2.500-3h-4z"/>
      <g class="tray-t" stroke="none" fill="#fff"><text x="1139" y="704.500" textLength="17" lengthAdjust="spacingAndGlyphs">ESP</text><text x="1174" y="695.500" textLength="47" lengthAdjust="spacingAndGlyphs">1:43 p. m.</text><text x="1170.500" y="712" textLength="54.500" lengthAdjust="spacingAndGlyphs">26/10/2018</text></g>
    </svg>
  </div>
</footer>

<svg class="over tab-left" width="82" height="46" viewBox="0 95 82 46">
  <path d="M39.500 95v14h14v16.500H76c3 0 4-2 4-4V95z" fill="#cbcbcb" stroke="#9a9a9a"/>
  <path d="M53 100.500h16M53 106h16M53 111.500h16M54 117h15" stroke="#6c6c6c" stroke-width="3.600"/>
  <path d="M1 95h38v8.500h11c2.500 0 3.500 1.500 3.500 4V136c0 3-1 4.500-4 4.500H17c-2.500 0-3.500-1.500-3.500-4V109.500H5c-3 0-4-2-4-4z" fill="url(#tabL)"/>
  <path d="M39.500 95v8.500h10c2.500 0 4 1.500 4 4V136c0 3-1 4.500-4 4.500H17c-2.500 0-3.500-1.500-3.500-4V109.500H5c-3 0-4-2-4-4" fill="none" stroke="#aaa99c"/>
  <g fill="#fff" stroke="#777"><path d="M34 114l-9.500 13M35 114l7 17" stroke="#555"/><ellipse cx="34" cy="114" rx="3.700" ry="2.500"/><ellipse cx="24.500" cy="127" rx="3.700" ry="2.500"/><ellipse cx="41.500" cy="131" rx="3.700" ry="2.500"/></g>
</svg>
<svg class="over tab-right" width="110" height="72" viewBox="1170 512 110 72">
  <path d="M1226.500 546v-29c0-3 2-4 4-4h32c3 0 4 2 4 4v28z" fill="#c9c9c9" stroke="#666"/>
  <path d="M1243 516h6v3h-6zM1236 520l3 3" fill="#666" stroke="#666" stroke-width="2"/><circle cx="1246" cy="530" r="10.500" fill="#e2e2e2" stroke="#999"/><path d="M1239 526.500h14v7h-14z" fill="#555"/><path d="M1251 538h13v3.500h-13zM1258 538v3" fill="none" stroke="#777"/>
  <path d="M1170 559.500h31V533c0-3 2-4.500 4.500-4.500h31c3 0 4.500 1.500 4.500 4.500v11.500h34c3 0 4 2 4 5V583h-109z" fill="url(#tabR)"/>
  <path d="M1170 559.500h31V533c0-3 2-4.500 4.500-4.500h31c3 0 4.500 1.500 4.500 4.500v11.500h34c3 0 4 2 4 5V583" fill="none" stroke="#8a866f"/>
  <circle cx="1221" cy="546" r="12" fill="#f5f5f5" stroke="#888"/><circle cx="1221" cy="546" r="9.500" fill="#e0e0e0" stroke="#aaa"/><path d="M1221.500 539v7.500h-7" fill="none" stroke="#333" stroke-width="1.500"/>
  <text class="rt" x="1181.500" y="579.500" textLength="60" lengthAdjust="spacingAndGlyphs">Realtime</text>
</svg>
</body>
</html>
```
FILE: styles.css
```css
* { box-sizing: border-box; }
body {
  margin: 0; width: 1280px; height: 719px; overflow: hidden; position: relative;
  display: flex; flex-direction: column; background: #fff; color: #111;
  font: 10.3px "DejaVu Sans Condensed", "DejaVu Sans", sans-serif;
}
.defs { position: absolute; }
svg { display: block; flex: none; }
.grow { flex: 1; }
.flip { transform: scaleX(-1); }

.title { height: 21px; display: flex; align-items: center; padding-left: 4px; font: 11.6px "Open Sans", "Noto Sans", sans-serif; }
.title-text { margin-left: 4px; letter-spacing: -.43px; white-space: pre; }
.winctl { margin-left: auto; margin-right: 20px; overflow: visible; }
.menu { height: 19px; display: flex; align-items: center; padding-left: 6px; font: 11px "Open Sans", "Noto Sans", sans-serif; letter-spacing: -.35px; }
.menu u { text-underline-offset: 1px; }
.m1 { width: 30px; } .m2 { width: 32px; } .m3 { width: 50px; } .m4 { width: 35px; } .m5 { width: 39px; } .m6 { width: 63px; }

.toolbar { height: 31px; display: flex; align-items: center; background: linear-gradient(#6f96c4, #769dca 50%, #7093c5); padding-right: 0; }
.tb { width: 33.6px; display: flex; justify-content: center; }
.tb svg { width: 23px; height: 23px; }
.tb:first-child { margin-left: -3px; }
.tb:last-child { margin-right: -2px; }
.sep { width: 10.7px; height: 26px; background: linear-gradient(#b9cadf, #b9cadf) center / 1px 100% no-repeat; }

.nav {
  height: 25px; display: grid; padding-top: 1px; border-bottom: 1.500px solid #b9b28e;
  grid-template-columns: 111px 207px 211px 59px 2.500px 62px 1.500px 207px 3px 207px 2px 207px;
  background: linear-gradient(90deg, #fff 0, #fbeeb0 55px, #fae37d 108px);
  white-space: nowrap; line-height: 21px;
}
.nav .btn, .root { height: 22px; text-align: center; }
.root { padding-right: 4px; line-height: 23px; }
.btn { border: 1.500px solid #1a1a1a; background: #fae37d; text-align: center; white-space: nowrap; letter-spacing: -.2px; }
.dim { color: #8d8a73; }
.nav .btn { display: block; }
.logical { font: bold 13px/27px "DejaVu Sans", sans-serif; letter-spacing: -.6px; padding-left: 4px; }

.work { height: 463.500px; display: flex; }
.canvas-col { width: 1212px; border-left: 1px solid #777; border-right: 1.500px solid #a2a5ad; display: flex; flex-direction: column; }
.canvas-row { display: flex; height: 447px; }
.canvas { width: 1195px; height: 447px; overflow: hidden; }
.lbl { text-anchor: middle; fill: #000; fill-opacity: .85; }
.note { fill: #222; }
.lbl, .note { font-size: 10.5px; }
.dots { fill: none; stroke: #0f0; stroke-width: 8.5px; stroke-linecap: round; }
.vscroll { flex: 1; background: #efefef; display: flex; flex-direction: column; align-items: center; padding-top: 4px; }
.vscroll i { width: 100%; height: 50px; margin-top: 3.500px; background: #cdcdcd; }
.hscroll { height: 16px; display: flex; align-items: center; background: #efefef; padding: 0 19px 0 3px; }
.hscroll i { width: 369px; height: 15px; margin-left: 4px; background: #cdcdcd; }

.side { flex: 1; background: #f0f0f0; }
.side-box { height: 313px; background: #e9e9e9; border-bottom: 1px solid #ccc; display: flex; flex-direction: column; }
.sb { height: 39px; width: 67px; display: flex; align-items: center; justify-content: center; }
.sel { background: #bcd8f0; border: 1px solid #8cc4f4; height: 37.500px; outline: 1px dotted #eef6fc; outline-offset: -4px; }
.side hr { margin: 0 0 3px; border: 0; border-top: 1.500px solid #b9b9b9; }
.mail { height: 38px; }

.timebar { height: 24px; display: flex; align-items: center; background: #fae37d; border-top: 1px solid #a9a591; border-bottom: 1px solid #bdb694; }
.timebar i { width: 2px; height: 100%; background: #111; margin-right: 9px; }
.time { width: 91.500px; padding-left: 14px; letter-spacing: -.2px; }
.timebar .btn { height: 20px; line-height: 18px; }
.pc { width: 97px; letter-spacing: -.2px; } .ff { width: 88px; margin-left: 1px; letter-spacing: -.2px; }

.bottom { height: 98px; display: flex; }
.palette { width: 188px; border-right: 1.500px solid #999; background: linear-gradient(90deg, #fff, #fafafa); padding: 4px 3px 0 2.500px; border-bottom: 1px solid #999; }
.row1 { display: flex; gap: 1.300px; height: 28px; align-items: center; }
.palette svg { width: 28px; height: 28px; }
.picked { width: 28px; height: 28px; background: #8ff9ff; border: 1px solid #222; display: flex; align-items: center; justify-content: center; }
.palette .picked svg { width: 26px; height: 26px; }
.search { width: 182px; height: 18px; margin-top: 6px; border: 1px solid #8b8b8b; background: #fff; }
.row2 { display: flex; margin-top: 6px; gap: 2px; }
.mid { width: 1073px; display: flex; flex-direction: column; border-right: 1px solid #666; background: linear-gradient(90deg, #fff, #dedede); }
.cables { flex: none; height: 57px; display: flex; align-items: center; gap: 5.500px; padding-left: 2.500px; border-top: 1px solid #aaa; }
.cables span { width: 32px; height: 32px; border: 1px solid #b9b9b9; border-radius: 4px; background: #e4e4e4; display: flex; align-items: center; justify-content: center; }
.cables svg { width: 28px; height: 28px; fill: none; stroke-width: 2.200px; }
.cscroll { flex: none; height: 16px; display: flex; align-items: center; background: #efefef; padding: 0 4px 0 3px; }
.cscroll i { width: 475px; height: 14px; margin-left: 4px; background: #cdcdcd; }
.status { height: 25px; border-top: 1.500px solid #111; border-bottom: 1px solid #555; text-align: center; line-height: 26px; letter-spacing: -.1px; }
.collapse { flex: 1; margin-left: 5px; background: #d4d4d4; display: flex; align-items: center; justify-content: center; }

.taskbar {
  height: 38px; display: flex; color: #fff;
  background: linear-gradient(90deg, #2e0911 0, #340911 120px, #311a0e 185px, #39270e 290px, #201713 370px, #15130f 510px, #30282a 580px, #2f2b2c 1000px, #2b2321 1055px, #320810 1090px);
}
.taskbar > span:not(.grow) { width: 46px; display: flex; align-items: center; justify-content: center; }
.taskbar > span:first-child { margin-left: -.3px; }
.taskbar span svg { width: 22px; height: 22px; }
.open { background: linear-gradient(#c6b9ad, #c6b9ad) bottom / 38px 2px no-repeat; }
.active { background: linear-gradient(#c6b9ad, #c6b9ad) bottom / 100% 2px no-repeat, #594e42; }
.tray { width: 240px; border-right: 0; }
.tray-t { font: 11px "Open Sans", sans-serif; }

.over { position: absolute; }
.tab-left { left: 0; top: 95px; }
.tab-right { right: 0; top: 512px; }
.rt { font: bold 13px "DejaVu Sans", sans-serif; fill: #111; }
```
